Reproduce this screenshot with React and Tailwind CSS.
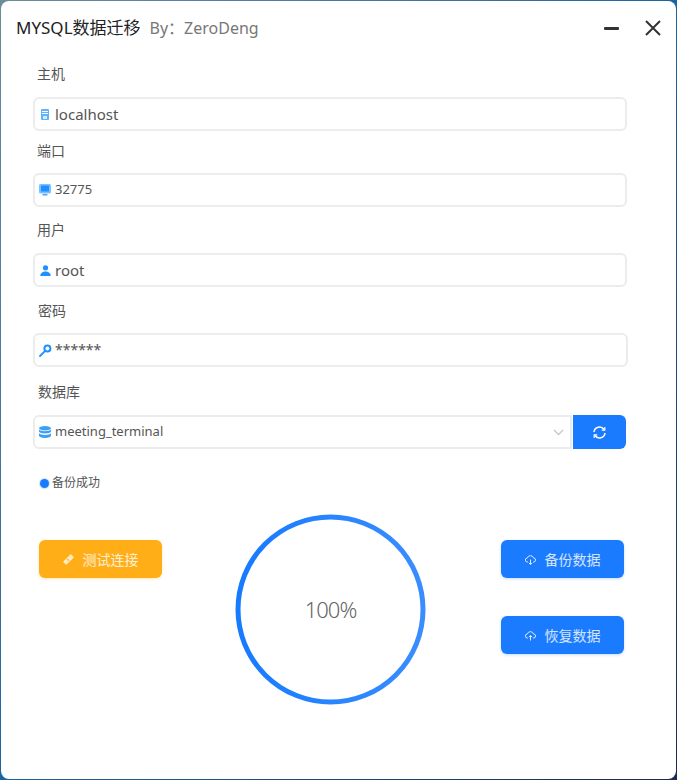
const font = "[font-family:'Noto_Sans','Noto_Sans_CJK_SC',sans-serif]";

function ServerIcon() {
  return (
    <svg width="8" height="11" viewBox="0 0 8 11">
      <rect width="8" height="11" rx="1" fill="#5db2ff" />
      <rect x="1" y="2" width="6" height="1" fill="#fff" />
      <rect x="1" y="4" width="6" height="1" fill="#fff" />
      <rect x="2" y="7" width="4" height="3" fill="#d4eaff" />
    </svg>
  );
}

function MonitorIcon() {
  return (
    <svg width="12" height="12" viewBox="0 0 12 12">
      <rect width="12" height="9.5" rx="1.5" fill="#7cc1ff" />
      <rect x="2" y="1.5" width="8" height="6" fill="#1e90ff" />
      <rect x="3.5" y="10" width="5" height="1.5" rx=".5" fill="#4aa6ff" />
    </svg>
  );
}

function UserIcon() {
  return (
    <svg width="11" height="11" viewBox="0 0 11 11" fill="#1e90ff">
      <circle cx="5.5" cy="2.8" r="2.6" />
      <path d="M0.3 11c0-3 2.3-4.6 5.2-4.6s5.2 1.6 5.2 4.6z" />
    </svg>
  );
}

function KeyIcon() {
  return (
    <svg width="13" height="13" viewBox="0 0 13 13" fill="none">
      <circle cx="8.4" cy="4.6" r="3" stroke="#1e90ff" strokeWidth="2" />
      <path d="M6.2 6.8L1 12" stroke="#1e90ff" strokeWidth="1.8" strokeLinecap="round" />
    </svg>
  );
}

function DatabaseIcon() {
  return (
    <svg width="12" height="12" viewBox="0 0 12 12" fill="#3ba0f5">
      <ellipse cx="6" cy="2.2" rx="6" ry="2.2" />
      <path d="M0 3.6c1 1.2 3.2 1.7 6 1.7s5-.5 6-1.7v2.2c-1 1.2-3.2 1.7-6 1.7s-5-.5-6-1.7z" />
      <path d="M0 7.2c1 1.2 3.2 1.7 6 1.7s5-.5 6-1.7v2.6C12 11 9.500 12 6 12s-6-1-6-2.200z" />
    </svg>
  );
}

function Chevron() {
  return (
    <svg width="11" height="7" viewBox="0 0 11 7" fill="none">
      <path d="M1 1l4.500 4.500L10 1" stroke="#c6c6c6" strokeWidth="1.300" />
    </svg>
  );
}

function RefreshIcon() {
  return (
    <svg width="13" height="13" viewBox="0 0 13 13" fill="none" stroke="#fff" strokeWidth="1.500">
      <path d="M1 6A5.500 5.500 0 0 1 11 3.500" />
      <path d="M12 7A5.500 5.500 0 0 1 2 9.500" />
      <path d="M11.800 1v3.200H8.800" strokeWidth="1.200" />
      <path d="M1.200 12V8.800h3" strokeWidth="1.200" />
    </svg>
  );
}

function CloudIcon({ up }) {
  return (
    <svg width="11" height="11" viewBox="0 0 11 11" fill="none" stroke="#fff" strokeWidth="1" opacity=".85">
      <path d="M3 8H2.500A2 2 0 0 1 2.300 4 3.300 3.300 0 0 1 8.600 4 2 2 0 0 1 8.500 8H8" />
      {up ? <path d="M5.500 10.500V5.500M3.800 7.200l1.700-1.700 1.700 1.700" /> : <path d="M5.500 5.500v5M3.800 8.800l1.700 1.700 1.700-1.700" />}
    </svg>
  );
}

function TicketIcon() {
  return (
    <svg width="11" height="11" viewBox="0 0 11 11">
      <g transform="rotate(-45 5.500 5.500)">
        <rect x="0" y="3.200" width="11" height="4.600" rx="1" fill="#ffe9bf" />
        <rect x="4.500" y="4.200" width="1" height="2.600" fill="#ffae17" />
      </g>
    </svg>
  );
}

function Field({ label, labelClass, children, icon, textClass, boxClass }) {
  return (
    <>
      <div className={`text-[14px] leading-[20px] text-[#555] ${labelClass}`}>{label}</div>
      <div className={`flex h-[34px] w-[594px] items-center rounded-[6px] border-2 border-[#ececec] bg-white ${boxClass}`}>
        <span className="flex w-5 shrink-0 justify-center">{icon}</span>
        <span className={`text-[#555] ${textClass}`}>{children}</span>
      </div>
    </>
  );
}

function ActionButton({ icon, children, className }) {
  return (
    <button className={`flex h-[38px] w-[123px] items-center justify-center gap-[9px] rounded-[6px] text-[14px] text-white/80 shadow-[0_1px_3px_rgba(22,119,255,0.25)] ${className}`}>
      {icon}
      {children}
    </button>
  );
}

function ProgressRing() {
  return (
    <div className="relative ml-[73px] h-[191px] w-[191px] shrink-0">
      <svg width="191" height="191" viewBox="0 0 191 191" fill="none">
        <defs>
          <linearGradient id="ring" x1="0" x2="1" y1="0" y2="0">
            <stop offset="0" stopColor="#167bff" />
            <stop offset="1" stopColor="#3a8dff" />
          </linearGradient>
        </defs>
        <circle cx="95.500" cy="95.500" r="92.500" stroke="url(#ring)" strokeWidth="5" />
      </svg>
      <div className="absolute inset-0 flex items-center justify-center text-[22px] font-light tracking-[-1px] text-[#666]">100%</div>
    </div>
  );
}

export default function App() {
  return (
    <div className={`h-[780px] w-[677px] overflow-hidden bg-gradient-to-br from-[#6d8b9d] via-[#1d659f] to-[#1d2a52] p-px ${font}`}>
      <div className="h-[778px] w-[675px] rounded-[8px] bg-white">
        {/* title bar */}
        <div className="flex h-[54px] items-center pl-[15px] pr-[15px]">
          <span className="text-[17px] text-[#222]">MYSQL数据迁移</span>
          <span className="ml-[9px] text-[16px] text-[#777]">By：ZeroDeng</span>
          <div className="ml-auto flex items-center gap-[25px]">
            <svg width="16" height="16" viewBox="0 0 16 16"><rect y="7" width="15" height="3" rx="1" fill="#333" /></svg>
            <svg width="16" height="16" viewBox="0 0 16 16" stroke="#333" strokeWidth="2"><path d="M1 1l14 14M15 1L1 15" /></svg>
          </div>
        </div>

        <div className="pl-[32px]">
          <Field label="主机" labelClass="ml-[4px] mt-[9px] mb-[13px]" icon={<ServerIcon />} textClass="text-[15px]">localhost</Field>
          <Field label="端口" labelClass="ml-[4px] mt-[10px] mb-[12px]" icon={<MonitorIcon />} textClass="text-[13px]">32775</Field>
          <Field label="用户" labelClass="ml-[4px] mt-[13px] mb-[13px]" icon={<UserIcon />} textClass="text-[15px]">root</Field>
          <Field label="密码" labelClass="ml-[5px] mt-[14px] mb-[12px]" icon={<KeyIcon />} textClass="text-[14px] -translate-y-px" boxClass="w-[595px]">******</Field>

          <div className="ml-[5px] mt-[15px] mb-[13px] text-[14px] leading-[20px] text-[#555]">数据库</div>
          <div className="flex h-[34px] items-center">
            <div className="flex h-[34px] w-[539px] items-center rounded-l-[6px] border-2 border-[#ececec] bg-white pr-[6px]">
              <span className="flex w-5 shrink-0 justify-center"><DatabaseIcon /></span>
              <span className="text-[13px] text-[#555]">meeting_terminal</span>
              <span className="ml-auto"><Chevron /></span>
            </div>
            <button className="ml-px flex h-[34px] w-[53px] items-center justify-center rounded-r-[6px] bg-[#1a7bff]"><RefreshIcon /></button>
          </div>

          <div className="ml-[7px] mt-[24px] flex h-[20px] items-center gap-[3px] text-[12px] text-[#555]">
            <span className="h-[9px] w-[9px] rounded-full bg-[#1a7bff] shadow-[0_0_0_1px_rgba(26,123,255,0.2)]" />
            备份成功
          </div>
        </div>

        <div className="mt-[21px] flex pl-[38px]">
          <div className="mt-[26px]">
            <ActionButton icon={<TicketIcon />} className="bg-[#ffae17] shadow-[0_1px_3px_rgba(255,174,23,0.3)]">测试连接</ActionButton>
          </div>
          <ProgressRing />
          <div className="ml-[75px] mt-[26px] flex flex-col gap-[38px]">
            <ActionButton icon={<CloudIcon />} className="bg-[#1a7bff]">备份数据</ActionButton>
            <ActionButton icon={<CloudIcon up />} className="bg-[#1a7bff]">恢复数据</ActionButton>
          </div>
        </div>
      </div>
    </div>
  );
}
